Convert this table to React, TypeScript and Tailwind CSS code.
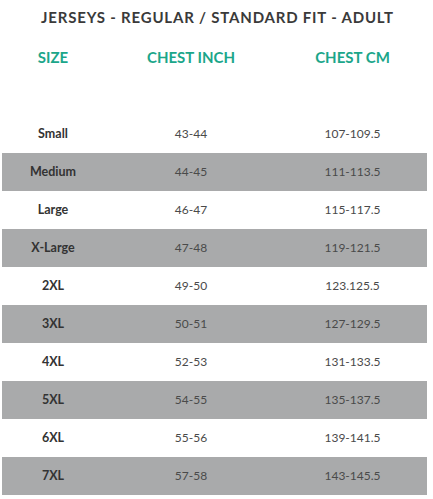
const rows = [
  { size: 'Small', inch: '43-44', cm: '107-109.5' },
  { size: 'Medium', inch: '44-45', cm: '111-113.5' },
  { size: 'Large', inch: '46-47', cm: '115-117.5' },
  { size: 'X-Large', inch: '47-48', cm: '119-121.5' },
  { size: '2XL', inch: '49-50', cm: '123.125.5' },
  { size: '3XL', inch: '50-51', cm: '127-129.5' },
  { size: '4XL', inch: '52-53', cm: '131-133.5' },
  { size: '5XL', inch: '54-55', cm: '135-137.5' },
  { size: '6XL', inch: '55-56', cm: '139-141.5' },
  { size: '7XL', inch: '57-58', cm: '143-145.5' },
];

export default function App() {
  return (
    <div className="w-[433px] h-[499px] bg-white overflow-hidden font-['Lato',sans-serif]">
      <h2 className="h-[35px] flex items-center justify-center text-[15px] font-bold tracking-[0.8px] text-[#3a3a3a] pl-[2px]">
        JERSEYS - REGULAR / STANDARD FIT - ADULT
      </h2>
      <div className="mx-[2px] w-[425px]">
        <div className="grid grid-cols-[102px_174px_149px] h-[44px] items-center text-[15px] font-bold text-[#1ba68a]">
          <div className="text-center">SIZE</div>
          <div className="text-center">CHEST INCH</div>
          <div className="text-center">CHEST CM</div>
        </div>
        <div className="h-[36px]" />
        {rows.map((r, i) => (
          <div
            key={r.size}
            className={`grid grid-cols-[102px_174px_149px] h-[38px] items-center text-[12px] ${i % 2 === 1 ? 'bg-[#a9aaab]' : 'bg-white'}`}
          >
            <div className="text-center font-bold text-[#333] text-[12.5px]">{r.size}</div>
            <div className="text-center text-[#4a4a4a]">{r.inch}</div>
            <div className="text-center text-[#4a4a4a]">{r.cm}</div>
          </div>
        ))}
      </div>
    </div>
  );
}
